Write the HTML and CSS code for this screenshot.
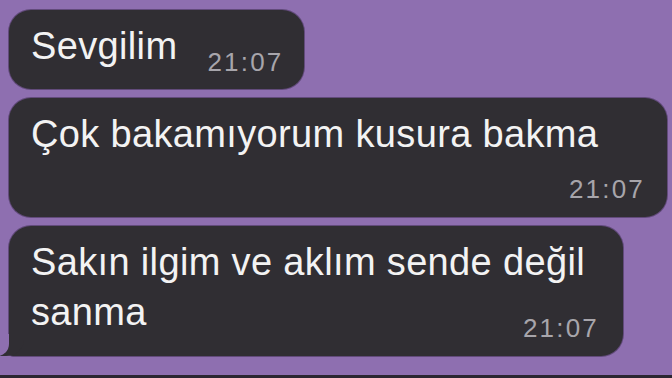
FILE: index.html
```html
<!DOCTYPE html>
<html lang="tr">
<head>
<meta charset="utf-8">
<title>Sohbet</title>
<link rel="stylesheet" href="styles.css">
</head>
<body>
<main class="chat">
  <div class="bubble b1">Sevgilim<span class="time">21:07</span></div>
  <div class="bubble b2">Çok bakamıyorum kusura bakma<span class="time time-below">21:07</span></div>
  <div class="bubble b3 tail">Sakın ilgim ve aklım sende değil<br>sanma<span class="time">21:07</span></div>
</main>
<div class="bar"></div>
</body>
</html>
```
FILE: styles.css
```css
html, body {
  margin: 0;
  padding: 0;
}
body {
  width: 672px;
  height: 378px;
  overflow: hidden;
  background: #8e6fb0;
  display: flex;
  flex-direction: column;
  font-family: "Liberation Sans", Arial, sans-serif;
}
.chat {
  flex: 1;
  display: flex;
  flex-direction: column;
  align-items: flex-start;
  gap: 9px;
  padding: 10px 5px 0 9px;
}
.bubble {
  position: relative;
  display: flow-root;
  box-sizing: border-box;
  background: #302e33;
  border-radius: 22px;
  box-shadow: 0 0 0 1px rgba(45, 32, 60, 0.45);
  color: #f3f3f3;
  font-size: 38px;
  letter-spacing: 0.35px;
  line-height: 50px;
  padding: 11px 22px 13px 22px;
}
.b1 {
  padding-bottom: 12px;
  padding-right: 21px;
}
.b2 {
  align-self: stretch;
}
.b3 {
  width: 614px;
  padding-right: 24px;
}
.time {
  float: right;
  font-size: 26px;
  line-height: 30px;
  letter-spacing: 2.2px;
  color: #a7a5ab;
  margin: 26px 0 0 30px;
}
.time-below {
  float: none;
  display: block;
  text-align: right;
  margin: 15px 0 0 0;
}
.tail {
  border-bottom-left-radius: 4px;
}
.tail::before {
  content: "";
  position: absolute;
  left: -9px;
  bottom: 0;
  width: 24px;
  height: 22px;
  background: #302e33;
  border-bottom-right-radius: 18px 16px;
}
.tail::after {
  content: "";
  position: absolute;
  left: -26px;
  bottom: 0;
  width: 26px;
  height: 22px;
  background: #8e6fb0;
  border-bottom-right-radius: 12px;
}
.bar {
  height: 3px;
  background: #2b2631;
}
```
